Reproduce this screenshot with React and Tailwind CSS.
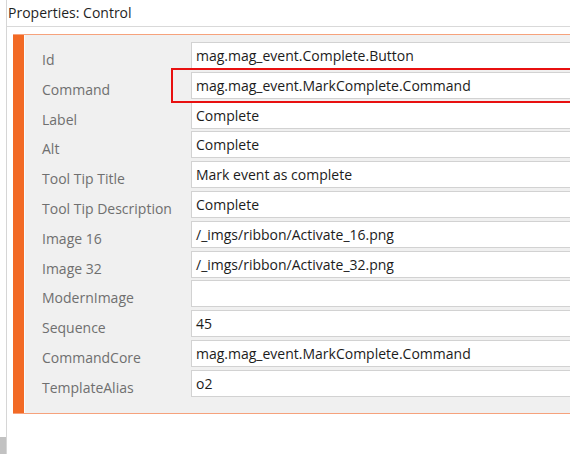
import React from 'react';

const ROWS = [
  ['Id', 'mag.mag_event.Complete.Button'],
  ['Command', 'mag.mag_event.MarkComplete.Command'],
  ['Label', 'Complete'],
  ['Alt', 'Complete'],
  ['Tool Tip Title', 'Mark event as complete'],
  ['Tool Tip Description', 'Complete'],
  ['Image 16', '/_imgs/ribbon/Activate_16.png'],
  ['Image 32', '/_imgs/ribbon/Activate_32.png'],
  ['ModernImage', ''],
  ['Sequence', '45'],
  ['CommandCore', 'mag.mag_event.MarkComplete.Command'],
  ['TemplateAlias', 'o2'],
];

export default function App() {
  return (
    <div className="relative w-[570px] h-[454px] overflow-hidden bg-white flex font-['Open_Sans',sans-serif]">
      {/* left gutter */}
      <div className="w-[6px] shrink-0 flex flex-col justify-end">
        <div className="h-[17px] bg-[#c2c2c2]" />
      </div>

      <div className="flex-1 min-w-0 flex flex-col border-l border-[#d6d6d6]">
        <div className="h-[27px] border-b border-[#d9d9d9] pl-[1px] text-[14px] leading-[26px] text-[#1f1f1f] whitespace-nowrap">
          Properties: Control
        </div>

        <div className="mt-[7px] ml-[6px] w-[700px] shrink-0 flex border-y border-[#f6a27c]">
          <div className="w-[11px] shrink-0 bg-[#f26a25]" />
          <div className="flex-1 bg-[#f0f0f0] border-l border-[#fbfbfb] pt-[7px] pb-[16px] grid grid-cols-[166px_1fr] gap-y-[2.8px]">
            {ROWS.map(([label, value]) => (
              <React.Fragment key={label}>
                <div className="pl-[17px] pt-[9px] h-[27px] text-[14px] leading-[18px] text-[#6f6f6f] whitespace-nowrap">
                  {label}
                </div>
                <div className="h-[27px] bg-white border border-[#d2d2d2] px-[4px] text-[14px] leading-[26px] text-[#1c1c1c] whitespace-nowrap">
                  {value}
                </div>
              </React.Fragment>
            ))}
          </div>
        </div>
      </div>

      {/* highlight annotation */}
      <div className="absolute left-[171px] top-[68px] w-[420px] h-[35px] border-2 border-[#e81010]" />
    </div>
  );
}
